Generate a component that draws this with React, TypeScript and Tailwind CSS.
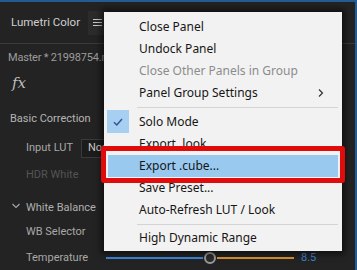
import React from 'react'

const menuFont = { fontFamily: '"Noto Sans", "Open Sans", sans-serif' }
const panelFont = { fontFamily: 'Roboto, "Noto Sans", sans-serif' }

function Item({ label, disabled, arrow, selected }: { label: string; disabled?: boolean; arrow?: boolean; selected?: boolean }) {
  return (
    <div className={`mx-[4px] h-[22px] flex items-center pl-[31px] pr-[10px] ${selected ? 'bg-[#99c9ef]' : ''}`}>
      <span className={`flex-1 text-[12px] leading-none ${disabled ? 'text-[#8c8c8c]' : 'text-[#161616]'}`}>{label}</span>
      {arrow && (
        <svg width="8" height="10" viewBox="0 0 8 10" className="mr-[3px]">
          <path d="M2 1.5 L5.5 5 L2 8.5" fill="none" stroke="#333" strokeWidth="1.2" />
        </svg>
      )}
    </div>
  )
}

function Sep({ h = 'h-[7px]' }: { h?: string }) {
  return (
    <div className={`${h} flex items-center pl-[33px] pr-[4px]`}>
      <div className="h-px w-full bg-[#d4d4d4]" />
    </div>
  )
}

export default function App() {
  return (
    <div className="relative w-[357px] h-[270px] overflow-hidden bg-[#232323] border-t-2 border-r-2 border-[#245b90] whitespace-nowrap" style={panelFont}>
      {/* header */}
      <div className="h-[42px] flex items-center pl-[11px] border-b border-[#3a3a3a] bg-[#232323]">
        <span className="w-[77px] text-[11.5px] text-[#cfcfcf]">Lumetri Color</span>
        <div className="w-[18px] h-[24px] flex flex-col justify-center items-center gap-[2px] bg-[#2b2b2b]">
          <div className="w-[9px] h-px bg-[#c8c8c8]" />
          <div className="w-[9px] h-px bg-[#c8c8c8]" />
          <div className="w-[9px] h-px bg-[#c8c8c8]" />
        </div>
      </div>

      {/* panel body */}
      <div className="text-[11px]">
        <div className="h-[29px] flex items-center pl-[8px] text-[#9c9c9c] tracking-[-0.2px]">Master * 21998754.mp4</div>
        <div className="h-[20px] flex items-center pl-[12px] text-[#bdbdbd] italic text-[15px]" style={{ fontFamily: '"DejaVu Serif", serif' }}>fx</div>
        <div className="h-[14px]" />
        <div className="h-[25px] flex items-center pl-[10px] text-[#b5b5b5]">Basic Correction</div>
        <div className="h-[33px] flex items-center pl-[26px] text-[#a8a8a8]">
          <span className="w-[55px]">Input LUT</span>
          <div className="h-[19px] w-[60px] flex items-center pl-[6px] bg-[#1c1c1c] border border-[#3a3a3a] text-[#c8c8c8]">None</div>
        </div>
        <div className="h-[20px] flex items-center pl-[26px] text-[#555555]">HDR White</div>
        <div className="h-[12px]" />
        <div className="h-[22px] flex items-center pl-[11px] text-[#b0b0b0]">
          <svg width="10" height="8" viewBox="0 0 10 8" className="mr-[5px] -mt-[4px]">
            <path d="M1.5 2 L5 5.5 L8.5 2" fill="none" stroke="#a8a8a8" strokeWidth="1.1" />
          </svg>
          <span>White Balance</span>
        </div>
        <div className="h-[26px] flex items-center pl-[26px] text-[#a8a8a8]">WB Selector</div>
        <div className="h-[26px] flex items-center pl-[26px] text-[#a8a8a8]">
          <span className="w-[80px]">Temperature</span>
          <div className="w-[97px] h-[2px] bg-[#3b86d6]" />
          <div className="w-[12px] h-[12px] mx-[1px] rounded-full border-[2px] border-[#9a9a9a] bg-[#2a2a2a]" />
          <div className="w-[77px] h-[2px] bg-[#d9912f]" />
          <span className="ml-[7px] text-[#3c82d2]">8.5</span>
        </div>
      </div>

      {/* flyout menu */}
      <div className="absolute left-[104px] top-[10px] w-[238px] h-[239px] pt-[4px] bg-[#f2f2f2] shadow-[0_0_6px_3px_rgba(0,0,0,0.55)]" style={menuFont}>
        <Item label="Close Panel" />
        <Item label="Undock Panel" />
        <Item label="Close Other Panels in Group" disabled />
        <Item label="Panel Group Settings" arrow />
        <Sep />
        <div className="relative">
          <div className="absolute left-[3px] top-[-1px] w-[22px] h-[23px] bg-[#a6cff1] flex items-center justify-center">
            <svg width="12" height="10" viewBox="0 0 12 10">
              <path d="M2 5.2 L4.8 8 L10 2" fill="none" stroke="#2a5c92" strokeWidth="1.5" />
            </svg>
          </div>
          <Item label="Solo Mode" />
        </div>
        <Item label="Export .look..." />
        <Item label="Export .cube..." selected />
        <Item label="Save Preset..." />
        <Item label="Auto-Refresh LUT / Look" />
        <Sep h="h-[6px]" />
        <Item label="High Dynamic Range" />
      </div>

      {/* red annotation box */}
      <div className="absolute left-[101px] top-[144px] w-[244px] h-[37px] border-[5px] border-[#e00b0b] rounded-[3px]" />
    </div>
  )
}
